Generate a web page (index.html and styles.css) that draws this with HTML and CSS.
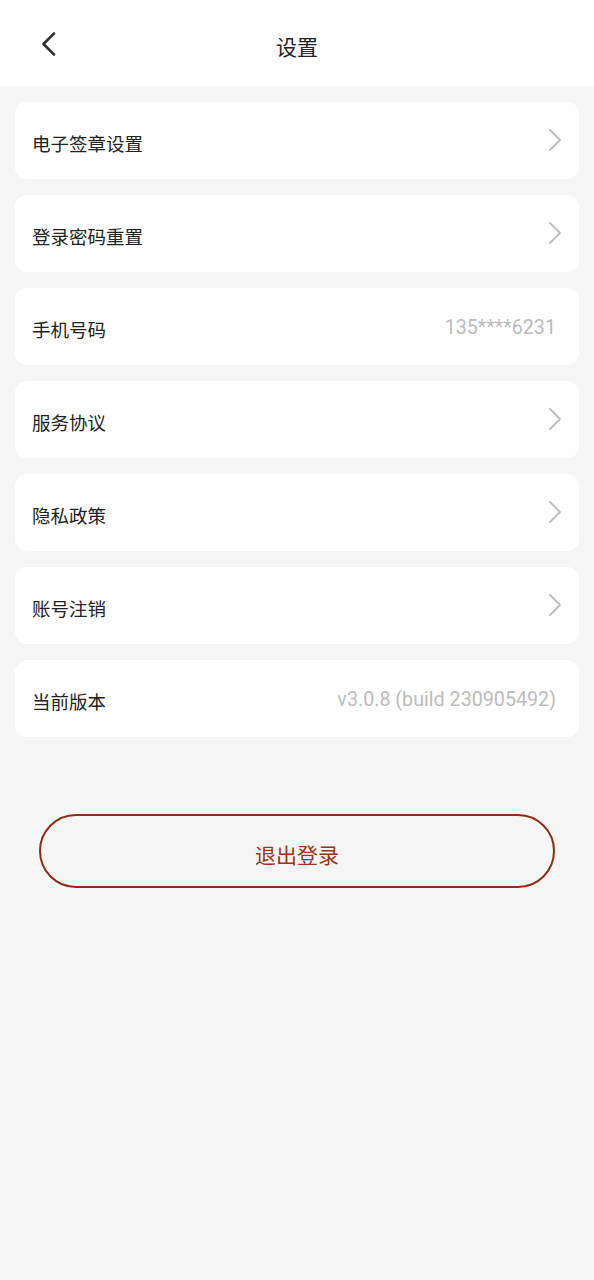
FILE: index.html
```html
<!DOCTYPE html>
<html lang="zh">
<head>
<meta charset="utf-8">
<link rel="stylesheet" href="styles.css">
</head>
<body>
<header class="topbar">
  <svg class="back" width="16" height="24" viewBox="0 0 16 24"><path d="M13 1.5 L2.5 12 L13 22.5" fill="none" stroke="#333" stroke-width="2.6" stroke-linecap="round" stroke-linejoin="round"/></svg>
  <h1 class="title">设置</h1>
</header>
<main class="list">
  <div class="card"><span class="label">电子签章设置</span><svg class="chev" width="14" height="22" viewBox="0 0 14 22"><path d="M2 1 L12 11 L2 21" fill="none" stroke="#bdbdbd" stroke-width="1.8" stroke-linecap="round" stroke-linejoin="round"/></svg></div>
  <div class="card"><span class="label">登录密码重置</span><svg class="chev" width="14" height="22" viewBox="0 0 14 22"><path d="M2 1 L12 11 L2 21" fill="none" stroke="#bdbdbd" stroke-width="1.8" stroke-linecap="round" stroke-linejoin="round"/></svg></div>
  <div class="card"><span class="label">手机号码</span><span class="value">135****6231</span></div>
  <div class="card"><span class="label">服务协议</span><svg class="chev" width="14" height="22" viewBox="0 0 14 22"><path d="M2 1 L12 11 L2 21" fill="none" stroke="#bdbdbd" stroke-width="1.8" stroke-linecap="round" stroke-linejoin="round"/></svg></div>
  <div class="card"><span class="label">隐私政策</span><svg class="chev" width="14" height="22" viewBox="0 0 14 22"><path d="M2 1 L12 11 L2 21" fill="none" stroke="#bdbdbd" stroke-width="1.8" stroke-linecap="round" stroke-linejoin="round"/></svg></div>
  <div class="card"><span class="label">账号注销</span><svg class="chev" width="14" height="22" viewBox="0 0 14 22"><path d="M2 1 L12 11 L2 21" fill="none" stroke="#bdbdbd" stroke-width="1.8" stroke-linecap="round" stroke-linejoin="round"/></svg></div>
  <div class="card"><span class="label">当前版本</span><span class="value">v3.0.8 (build 230905492)</span></div>
</main>
<div class="logout-wrap">
  <button class="logout">退出登录</button>
</div>
</body>
</html>
```
FILE: styles.css
```css
* { box-sizing: border-box; }
html, body { margin: 0; padding: 0; }
body {
  background: #f5f5f5;
  font-family: Roboto, "Noto Sans CJK SC", sans-serif;
  min-height: 1280px;
}
.topbar {
  height: 86px;
  background: #fff;
  display: flex;
  align-items: center;
  justify-content: center;
  position: relative;
}
.back {
  position: absolute;
  left: 41px;
  top: 32px;
}
.title {
  margin: 0;
  font-size: 21px;
  font-weight: 400;
  color: #222;
  margin-top: 5px;
}
.list {
  padding: 16px 15px 0;
  display: flex;
  flex-direction: column;
  gap: 16px;
}
.card {
  height: 77px;
  background: #fff;
  border-radius: 12px;
  display: flex;
  align-items: center;
  justify-content: space-between;
  padding: 0 16px 0 17px;
}
.label {
  font-size: 18.5px;
  color: #222;
  padding-top: 5px;
}
.value {
  font-size: 19.7px;
  color: #bcbcbc;
  margin-right: 7px;
  padding-top: 1px;
}
.chev {
  margin-right: 1px;
  margin-top: -1px;
}
.logout-wrap {
  padding: 77px 39px 0;
}
.logout {
  width: 100%;
  height: 74px;
  border: 2px solid #8c2e16;
  border-radius: 37px;
  background: transparent;
  color: #9a3418;
  font-family: Roboto, "Noto Sans CJK SC", sans-serif;
  font-size: 21px;
  padding-top: 6px;
}
```
